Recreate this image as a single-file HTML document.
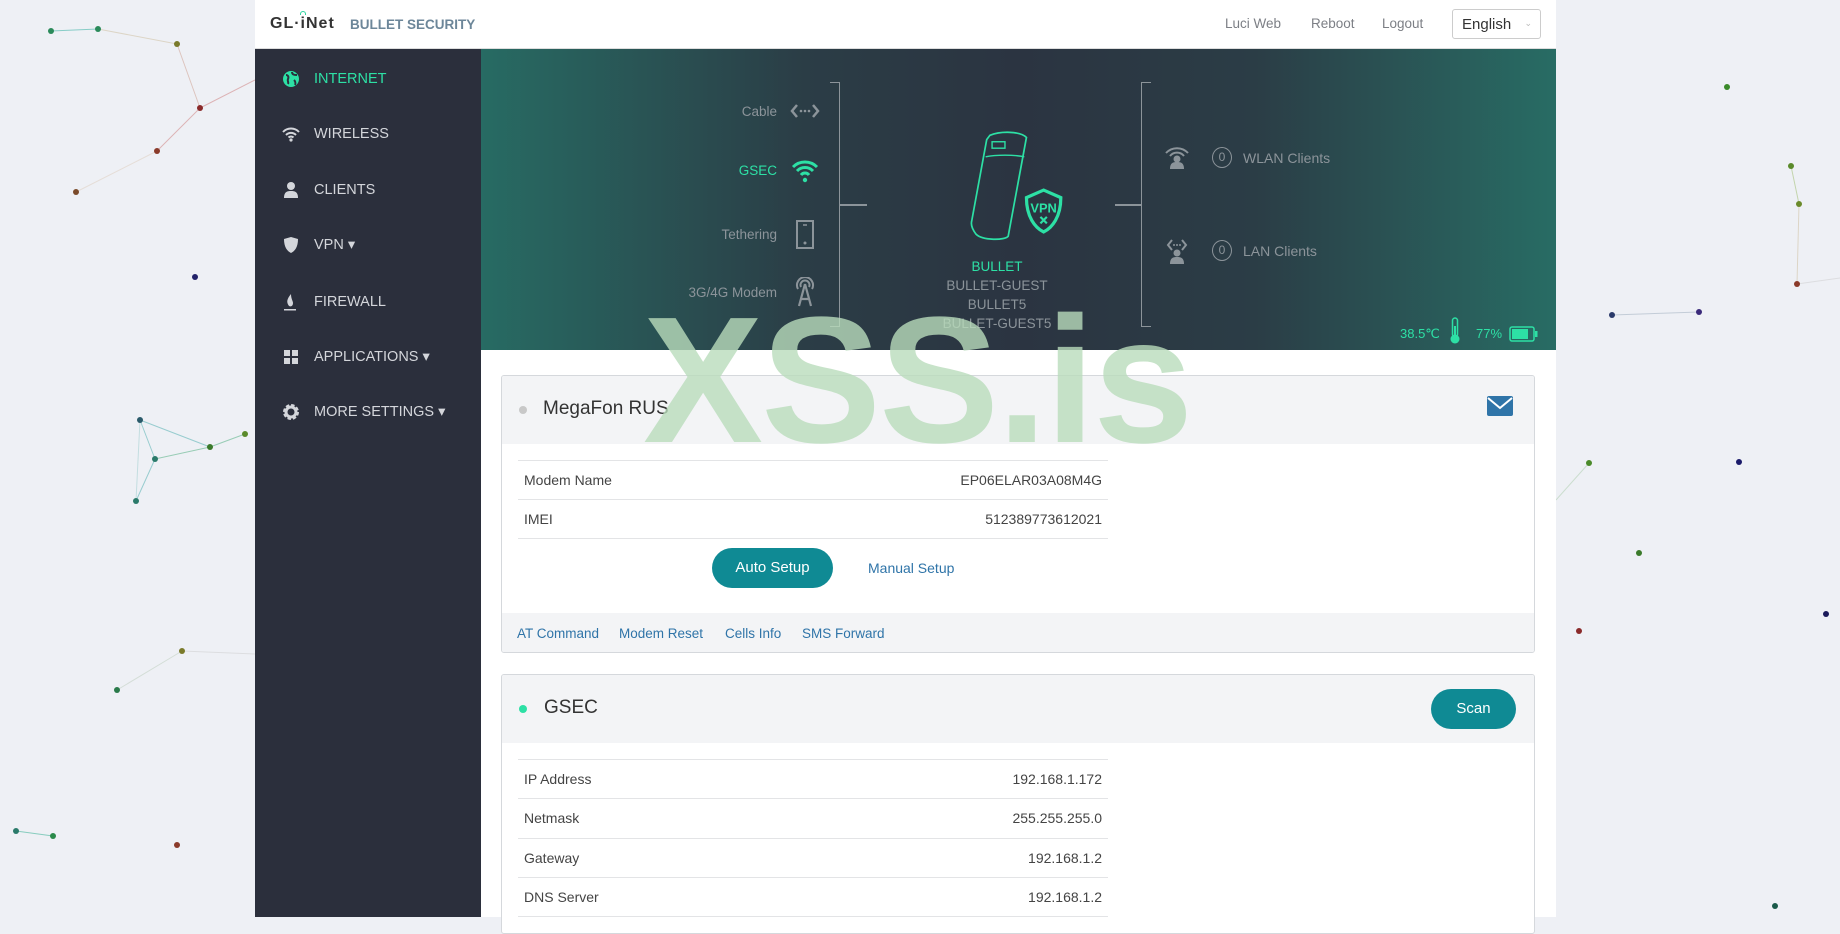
<!DOCTYPE html>
<html><head><meta charset="utf-8"><style>
*{box-sizing:border-box;margin:0;padding:0}
body{width:1840px;height:917px;overflow:hidden;background:#eef0f5;font-family:"Liberation Sans",sans-serif;position:relative}
.abs{position:absolute}
#bg{position:absolute;left:0;top:0}
#wrap{position:absolute;left:255px;top:0;width:1301px;height:917px;background:#fff}
#hdr{position:absolute;left:0;top:0;width:1301px;height:49px;background:#fff;border-bottom:1px solid #ddd}
#side{position:absolute;left:0;top:49px;width:226px;height:868px;background:#2b2f3c}
.nav{position:absolute;left:0;width:226px;height:30px;color:#d4d6db;font-size:14.5px;line-height:30px}
.nav .ic{position:absolute;left:27px;top:6px;width:18px;height:18px}
.nav span{position:absolute;left:59px}
#ban{position:absolute;left:226px;top:49px;width:1075px;height:301px;background:linear-gradient(90deg,#276b63 0%,#2b3d46 30%,#2b3441 50%,#2b3d46 72%,#286c64 100%)}
.lt{position:absolute;color:#8c949a;font-size:13.5px;text-align:right;white-space:nowrap}
.card{position:absolute;left:246px;width:1034px;border:1px solid #d5d8dc;border-radius:3px;background:#fff;overflow:hidden}
.ch{background:#f3f4f6;height:68px;position:relative}
.row{position:absolute;left:16px;width:590px;height:39px;border-top:1px solid #e3e4e6;font-size:14px;color:#444;line-height:39px}
.row b{font-weight:normal;position:absolute;right:6px;color:#444}
.row i{font-style:normal;position:absolute;left:6px}
a{color:#2f74a8;text-decoration:none;white-space:nowrap}
</style></head><body>
<svg id="bg" width="1840" height="917">
<g stroke-width="1" opacity=".5">
<line x1="51" y1="31" x2="98" y2="29" stroke="#2a9"/><line x1="98" y1="29" x2="177" y2="44" stroke="#cb9"/><line x1="177" y1="44" x2="200" y2="108" stroke="#c98"/><line x1="200" y1="108" x2="157" y2="151" stroke="#c77"/><line x1="157" y1="151" x2="76" y2="192" stroke="#dcb"/><line x1="200" y1="108" x2="255" y2="80" stroke="#c77"/>
<line x1="140" y1="420" x2="155" y2="459" stroke="#4aa"/><line x1="155" y1="459" x2="210" y2="447" stroke="#4a7"/><line x1="140" y1="420" x2="210" y2="447" stroke="#4aa"/><line x1="136" y1="501" x2="155" y2="459" stroke="#4aa"/><line x1="136" y1="501" x2="140" y2="420" stroke="#9cc"/><line x1="210" y1="447" x2="245" y2="434" stroke="#4a7"/>
<line x1="117" y1="690" x2="182" y2="651" stroke="#bcb"/><line x1="182" y1="651" x2="255" y2="654" stroke="#ccc"/><line x1="16" y1="831" x2="53" y2="836" stroke="#2a8"/>
<line x1="1612" y1="315" x2="1699" y2="312" stroke="#9ab"/><line x1="1791" y1="166" x2="1799" y2="204" stroke="#9b6"/><line x1="1799" y1="204" x2="1797" y2="284" stroke="#cb9"/><line x1="1797" y1="284" x2="1840" y2="278" stroke="#ccc"/><line x1="1556" y1="500" x2="1589" y2="463" stroke="#aca"/>
</g>
<g>
<circle cx="51" cy="31" r="3" fill="#2a8a5a"/><circle cx="98" cy="29" r="3" fill="#2a8a5a"/><circle cx="177" cy="44" r="3" fill="#7a7a2a"/><circle cx="200" cy="108" r="3" fill="#8a2a2a"/><circle cx="157" cy="151" r="3" fill="#8a3a2a"/><circle cx="76" cy="192" r="3" fill="#7a4a2a"/><circle cx="195" cy="277" r="3" fill="#22226a"/>
<circle cx="140" cy="420" r="3" fill="#2a5a6a"/><circle cx="155" cy="459" r="3" fill="#2a7a6a"/><circle cx="210" cy="447" r="3" fill="#3a7a2a"/><circle cx="136" cy="501" r="3" fill="#2a7a6a"/><circle cx="245" cy="434" r="3" fill="#5a8a2a"/>
<circle cx="117" cy="690" r="3" fill="#2a7a4a"/><circle cx="182" cy="651" r="3" fill="#7a7a2a"/><circle cx="16" cy="831" r="3" fill="#2a7a6a"/><circle cx="53" cy="836" r="3" fill="#2a8a4a"/><circle cx="177" cy="845" r="3" fill="#8a3a2a"/>
<circle cx="1727" cy="87" r="3" fill="#3a8a2a"/><circle cx="1791" cy="166" r="3" fill="#5a8a2a"/><circle cx="1799" cy="204" r="3" fill="#6a8a2a"/><circle cx="1797" cy="284" r="3" fill="#8a3a2a"/><circle cx="1612" cy="315" r="3" fill="#2a3a6a"/><circle cx="1699" cy="312" r="3" fill="#3a2a7a"/><circle cx="1589" cy="463" r="3" fill="#4a8a2a"/><circle cx="1739" cy="462" r="3" fill="#1a1a6a"/><circle cx="1639" cy="553" r="3" fill="#3a7a2a"/><circle cx="1579" cy="631" r="3" fill="#8a2a2a"/><circle cx="1826" cy="614" r="3" fill="#1a1a5a"/><circle cx="1775" cy="906" r="3" fill="#1a5a4a"/>
</g></svg>

<div id="wrap">
<div id="hdr">
 <div class="abs" style="left:15px;top:15px;font-size:16px;font-weight:bold;color:#333;letter-spacing:1px">GL·iNet</div>
 <div class="abs" style="left:45px;top:11px;width:6px;height:4px;border:1.5px solid #2dd4a0;border-bottom:none;border-radius:6px 6px 0 0"></div>
 <div class="abs" style="left:95px;top:17px;font-size:13.5px;font-weight:bold;color:#6c8699">BULLET SECURITY</div>
 <div class="abs" style="left:970px;top:16px;font-size:13.5px;color:#7c7f85">Luci Web</div>
 <div class="abs" style="left:1056px;top:16px;font-size:13.5px;color:#7c7f85">Reboot</div>
 <div class="abs" style="left:1127px;top:16px;font-size:13.5px;color:#7c7f85">Logout</div>
 <div class="abs" style="left:1197px;top:9px;width:89px;height:30px;border:1px solid #ccc;border-radius:3px;font-size:15px;color:#333;padding:6px 0 0 9px">English<span style="position:absolute;right:8px;top:8px;font-size:9px;color:#bbb">⌄</span></div>
</div>

<div id="side">
 <div class="nav" style="top:15px;color:#2de0a5"><svg class="ic" viewBox="0 0 18 18"><circle cx="9" cy="9" r="8" fill="#2de0a5"/><path d="M4 5c2 0 3 2 2 4s1 3 0 5M10 2c0 3 3 3 5 3M12 10c1 1 2 3 1 5" stroke="#2b2f3c" stroke-width="2" fill="none"/></svg><span>INTERNET</span></div>
 <div class="nav" style="top:70px"><svg class="ic" viewBox="0 0 18 18"><path d="M1 7a11 11 0 0 1 16 0M4 10a7 7 0 0 1 10 0M6.5 12.5a3.5 3.5 0 0 1 5 0" stroke="#d4d6db" stroke-width="2" fill="none"/><circle cx="9" cy="15" r="1.6" fill="#d4d6db"/></svg><span>WIRELESS</span></div>
 <div class="nav" style="top:126px"><svg class="ic" viewBox="0 0 18 18"><circle cx="9" cy="5" r="4" fill="#d4d6db"/><path d="M2 17c0-6 3-7 7-7s7 1 7 7z" fill="#d4d6db"/></svg><span>CLIENTS</span></div>
 <div class="nav" style="top:181px"><svg class="ic" viewBox="0 0 18 18"><path d="M2 3l7-2 7 2c0 8-3 12-7 14C5 15 2 11 2 3z" fill="#d4d6db"/></svg><span>VPN ▾</span></div>
 <div class="nav" style="top:238px"><svg class="ic" viewBox="0 0 18 18"><path d="M9 1c-4 5-5 8-2 12 2 1 4 0 4-3 0-2-2-4-2-9z" fill="#d4d6db"/><rect x="2" y="16" width="12" height="1.5" fill="#d4d6db"/></svg><span>FIREWALL</span></div>
 <div class="nav" style="top:293px"><svg class="ic" viewBox="0 0 18 18"><rect x="2" y="2" width="6" height="6" fill="#d4d6db"/><rect x="10" y="2" width="6" height="6" fill="#d4d6db"/><rect x="2" y="10" width="6" height="6" fill="#d4d6db"/><rect x="10" y="10" width="6" height="6" fill="#d4d6db"/></svg><span>APPLICATIONS ▾</span></div>
 <div class="nav" style="top:348px"><svg class="ic" viewBox="0 0 18 18"><circle cx="9" cy="9" r="6" fill="none" stroke="#d4d6db" stroke-width="4" stroke-dasharray="3 1.7"/><circle cx="9" cy="9" r="5" fill="none" stroke="#d4d6db" stroke-width="3"/></svg><span>MORE SETTINGS ▾</span></div>
</div>

<div id="ban">
 <div class="lt" style="right:779px;top:55px">Cable</div>
 <div class="lt" style="right:779px;top:114px;color:#2de0a5">GSEC</div>
 <div class="lt" style="right:779px;top:178px">Tethering</div>
 <div class="lt" style="right:779px;top:236px">3G/4G Modem</div>
 <svg class="abs" style="left:309px;top:54px" width="30" height="16" viewBox="0 0 30 16"><path d="M7 2L2 8l5 6M23 2l5 6-5 6" stroke="#8c949a" stroke-width="2.5" fill="none"/><circle cx="11" cy="8" r="1.3" fill="#8c949a"/><circle cx="15" cy="8" r="1.3" fill="#8c949a"/><circle cx="19" cy="8" r="1.3" fill="#8c949a"/></svg>
 <svg class="abs" style="left:310px;top:110px" width="28" height="24" viewBox="0 0 28 24"><path d="M2 8a17 17 0 0 1 24 0M6 12a11 11 0 0 1 16 0M10 16a5 5 0 0 1 8 0" stroke="#2de0a5" stroke-width="3" fill="none"/><circle cx="14" cy="21" r="2.2" fill="#2de0a5"/></svg>
 <svg class="abs" style="left:314px;top:171px" width="20" height="30" viewBox="0 0 20 30"><rect x="2" y="1" width="16" height="27" stroke="#8c949a" stroke-width="2" fill="none"/><line x1="8" y1="5" x2="12" y2="5" stroke="#8c949a" stroke-width="1.5"/><circle cx="10" cy="23" r="1.5" fill="#8c949a"/></svg>
 <svg class="abs" style="left:313px;top:228px" width="22" height="30" viewBox="0 0 22 30"><path d="M4 12a8 8 0 1 1 14 0M7 10a4.5 4.5 0 1 1 8 0" stroke="#8c949a" stroke-width="2" fill="none"/><path d="M11 7l-6 22M11 7l6 22M7 22h8" stroke="#8c949a" stroke-width="2.2" fill="none"/></svg>
 <div class="abs" style="left:349px;top:33px;width:10px;height:245px;border:1.5px solid #8c949a;border-left:none"></div>
 <div class="abs" style="left:359px;top:155px;width:27px;height:1.5px;background:#8c949a"></div>
 <svg class="abs" style="left:476px;top:82px" width="126" height="116" viewBox="0 0 100 108"><path d="M22 4c10-4 28-4 34 2l-17 92c-3 4-24 4-30-2C6 92 4 88 5 84L19 8z" stroke="#2de0a5" stroke-width="1.6" fill="none"/><path d="M18 24c10-2 26-2 36 0" stroke="#2de0a5" stroke-width="1.3" fill="none"/><rect x="24" y="10" width="12" height="6" stroke="#2de0a5" stroke-width="1.3" fill="none"/><path d="M56 62l16-7 16 7c0 18-8 28-16 32-8-4-16-14-16-32z" stroke="#2de0a5" stroke-width="3" fill="#2b3441"/><text x="72" y="76" fill="#2de0a5" font-size="12" font-weight="bold" text-anchor="middle" font-family="Liberation Sans">VPN</text><path d="M69 80l6 6M75 80l-6 6" stroke="#2de0a5" stroke-width="2"/></svg>
 <div class="abs" style="left:416px;top:208px;width:200px;text-align:center;font-size:13.5px;line-height:19px;color:#8c949a"><div style="color:#2de0a5">BULLET</div>BULLET-GUEST<br>BULLET5<br>BULLET-GUEST5</div>
 <div class="abs" style="left:660px;top:33px;width:10px;height:245px;border:1.5px solid #8c949a;border-right:none"></div>
 <div class="abs" style="left:634px;top:155px;width:26px;height:1.5px;background:#8c949a"></div>
 <svg class="abs" style="left:683px;top:96px" width="26" height="24" viewBox="0 0 26 24"><path d="M2 8a15 15 0 0 1 22 0M6 11a9 9 0 0 1 14 0" stroke="#8c949a" stroke-width="2" fill="none"/><circle cx="13" cy="14" r="3.5" fill="#8c949a"/><path d="M6 24c0-6 3-7 7-7s7 1 7 7z" fill="#8c949a"/></svg>
 <svg class="abs" style="left:685px;top:189px" width="22" height="26" viewBox="0 0 22 26"><path d="M6 2L2 7l4 5M16 2l4 5-4 5" stroke="#8c949a" stroke-width="2" fill="none"/><circle cx="8" cy="7" r="1" fill="#8c949a"/><circle cx="11" cy="7" r="1" fill="#8c949a"/><circle cx="14" cy="7" r="1" fill="#8c949a"/><circle cx="11" cy="15" r="3.5" fill="#8c949a"/><path d="M4 26c0-6 3-7 7-7s7 1 7 7z" fill="#8c949a"/></svg>
 <div class="abs" style="left:731px;top:98px;width:20px;height:21px;border:1px solid #8c949a;border-radius:50%;color:#8c949a;font-size:12px;text-align:center;line-height:19px">0</div>
 <div class="lt" style="left:762px;top:101px;font-size:14px;text-align:left">WLAN Clients</div>
 <div class="abs" style="left:731px;top:191px;width:20px;height:21px;border:1px solid #8c949a;border-radius:50%;color:#8c949a;font-size:12px;text-align:center;line-height:19px">0</div>
 <div class="lt" style="left:762px;top:194px;font-size:14px;text-align:left">LAN Clients</div>
 <div class="abs" style="left:919px;top:277px;color:#2de0a5;font-size:13px">38.5℃</div>
 <svg class="abs" style="left:968px;top:268px" width="12" height="28" viewBox="0 0 12 28"><rect x="3.5" y="1" width="5" height="19" rx="2.5" stroke="#2de0a5" stroke-width="1.5" fill="none"/><circle cx="6" cy="22" r="4.5" fill="#2de0a5"/><rect x="5" y="9" width="2" height="12" fill="#2de0a5"/></svg>
 <div class="abs" style="left:995px;top:277px;color:#2de0a5;font-size:13px">77%</div>
 <svg class="abs" style="left:1028px;top:277px" width="30" height="16" viewBox="0 0 30 16"><rect x="1" y="1" width="24" height="14" rx="2" stroke="#2de0a5" stroke-width="1.5" fill="none"/><rect x="3" y="3" width="16" height="10" fill="#2de0a5"/><rect x="26" y="5" width="2.5" height="6" fill="#2de0a5"/></svg>
</div>

<div class="card" style="top:375px;height:278px">
 <div class="ch"><div class="abs" style="left:17px;top:30px;width:8px;height:8px;border-radius:50%;background:#c8c8c8"></div><div class="abs" style="left:41px;top:22px;font-size:19px;color:#333">MegaFon RUS</div>
 <svg class="abs" style="left:985px;top:20px" width="26" height="20" viewBox="0 0 26 20"><rect x="0" y="0" width="26" height="20" rx="2" fill="#2f74a8"/><path d="M1 2l12 10 12-10" stroke="#fff" stroke-width="2" fill="none"/></svg></div>
 <div class="row" style="top:84px"><i>Modem Name</i><b>EP06ELAR03A08M4G</b></div>
 <div class="row" style="top:123px"><i>IMEI</i><b>512389773612021</b></div>
 <div class="row" style="top:162px;height:1px"></div>
 <div class="abs" style="left:210px;top:172px;width:121px;height:40px;border-radius:20px;background:#0f8a94;color:#fff;font-size:15px;text-align:center;line-height:40px">Auto Setup</div>
 <div class="abs" style="left:366px;top:184px;font-size:14px"><a>Manual Setup</a></div>
 <div class="abs" style="left:0;top:237px;width:1034px;height:41px;background:#f3f4f6;font-size:13.5px;line-height:41px"><a style="position:absolute;left:15px">AT Command</a><a style="position:absolute;left:117px">Modem Reset</a><a style="position:absolute;left:223px">Cells Info</a><a style="position:absolute;left:300px">SMS Forward</a></div>
</div>

<div class="card" style="top:674px;height:260px">
 <div class="ch"><div class="abs" style="left:17px;top:30px;width:8px;height:8px;border-radius:50%;background:#2de0a5"></div><div class="abs" style="left:42px;top:22px;font-size:19px;color:#333">GSEC</div>
 <div class="abs" style="left:929px;top:14px;width:85px;height:40px;border-radius:20px;background:#0f8a94;color:#fff;font-size:15px;text-align:center;line-height:40px">Scan</div></div>
 <div class="row" style="top:84px"><i>IP Address</i><b>192.168.1.172</b></div>
 <div class="row" style="top:123px"><i>Netmask</i><b>255.255.255.0</b></div>
 <div class="row" style="top:163px"><i>Gateway</i><b>192.168.1.2</b></div>
 <div class="row" style="top:202px"><i>DNS Server</i><b>192.168.1.2</b></div>
 <div class="row" style="top:241px"></div>
</div>
</div>

<div class="abs" style="left:643px;top:281px;font-size:180px;font-weight:bold;color:rgba(185,220,188,0.8);line-height:200px;letter-spacing:-2px">XSS.is</div>
</body></html>
